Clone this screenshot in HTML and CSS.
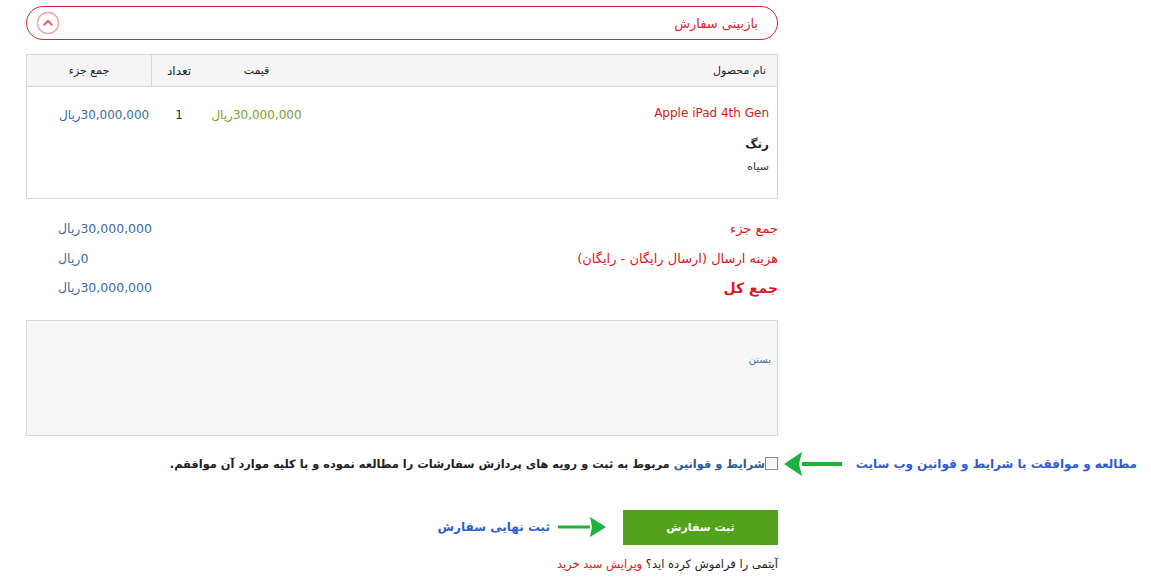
FILE: index.html
```html
<!DOCTYPE html>
<html lang="fa" dir="rtl">
<head>
<meta charset="utf-8">
<title>بازبینی سفارش</title>
<link rel="stylesheet" href="styles.css">
</head>
<body>
<div class="page">
  <div class="review-bar">
    <span class="review-title">بازبینی سفارش</span>
    <svg class="toggle-icon" width="24" height="24" viewBox="0 0 24 24">
      <circle cx="12" cy="12" r="10.5" fill="none" stroke="#f2a3aa" stroke-width="1.4"/>
      <path d="M8.3 13.6 L12 9.9 L15.7 13.6" fill="none" stroke="#e4707b" stroke-width="2.2" stroke-linecap="round" stroke-linejoin="round"/>
    </svg>
  </div>

  <div class="cart-table">
    <div class="row head">
      <div class="c-name">نام محصول</div>
      <div class="c-price">قیمت</div>
      <div class="c-qty">تعداد</div>
      <div class="c-total sep">جمع جزء</div>
    </div>
    <div class="row body">
      <div class="c-name">
        <div class="prod-name">Apple iPad 4th Gen</div>
        <div class="opt-label">رنگ</div>
        <div class="opt-value">سیاه</div>
      </div>
      <div class="c-price green">30,000,000ریال</div>
      <div class="c-qty">1</div>
      <div class="c-total blue">30,000,000ریال</div>
    </div>
  </div>

  <div class="totals">
    <div class="t-row"><span class="t-label">جمع جزء</span><span class="t-val">30,000,000ریال</span></div>
    <div class="t-row"><span class="t-label">هزینه ارسال (ارسال رایگان - رایگان)</span><span class="t-val">0ریال</span></div>
    <div class="t-row grand"><span class="t-label">جمع کل</span><span class="t-val">30,000,000ریال</span></div>
  </div>

  <div class="comment-box"><span class="comment-text">بستن</span></div>

  <div class="agree-row">
    <span class="checkbox"></span>
    <span class="agree-text"><span class="link">شرایط و قوانین</span> مربوط به ثبت و رویه های پردازش سفارشات را مطالعه نموده و با کلیه موارد آن موافقم.</span>
    <div class="annot annot-agree">
      <svg width="60" height="26" viewBox="0 0 60 26">
        <path d="M18 11 H58 V15 H18 Z" fill="#1cb23b"/>
        <path d="M0 13 L18 1 L15 13 L18 25 Z" fill="#1cb23b"/>
      </svg>
      <span class="annot-text">مطالعه و موافقت با شرایط و قوانین وب سایت</span>
    </div>
  </div>

  <div class="submit-row">
    <button class="submit-btn">ثبت سفارش</button>
    <svg class="annot-arrow" width="48" height="22" viewBox="0 0 48 22">
      <path d="M0 9.5 H32 V12.5 H0 Z" fill="#1cb23b"/>
      <path d="M48 11 L32 1 L34 11 L32 21 Z" fill="#1cb23b"/>
    </svg>
    <span class="annot-text">ثبت نهایی سفارش</span>
  </div>

  <div class="forgot">آیتمی را فراموش کرده اید؟ <span class="red">ویرایش سبد خرید</span></div>
</div>
</body>
</html>
```
FILE: styles.css
```css
* { box-sizing: border-box; }
html, body { margin: 0; padding: 0; background: #fff; }
body {
  font-family: "DejaVu Sans", sans-serif;
  font-size: 11px;
  color: #333;
}
.page {
  width: 752px;
  margin-left: 26px;
  margin-right: auto;
  padding-top: 6px;
  position: relative;
}
.review-bar {
  height: 34px;
  border: 1px solid #d9262f;
  border-radius: 17px;
  display: flex;
  align-items: center;
  justify-content: space-between;
  padding: 0 19px 0 9px;
}
.review-title { color: #d9262f; font-size: 13px; }
.toggle-icon { display: block; }

.cart-table {
  margin-top: 14px;
  border: 1px solid #d6d6d6;
}
.row { display: flex; }
.row.head {
  height: 32px;
  background: #f5f5f5;
  border-bottom: 1px solid #d6d6d6;
  align-items: stretch;
}
.row.head > div { display: flex; align-items: center; color: #222; }
.row.head .c-name { padding-right: 11px; }
.row.head .c-price, .row.head .c-qty, .row.head .c-total { justify-content: center; }
.c-name { flex: 1; }
.c-price { width: 101px; text-align: center; }
.c-qty { width: 54px; text-align: center; }
.c-total { width: 125px; text-align: center; }
.sep { border-right: 1px solid #d6d6d6; }
.row.body { height: 111px; }
.row.body > div { padding-top: 21px; }
.row.body .c-name { padding-right: 8px; padding-top: 19px; }
.row.body .c-total { text-align: left; padding-left: 32px; }
.prod-name { color: #e0151d; font-size: 12px; }
.opt-label { font-weight: bold; color: #222; margin-top: 17px; font-size: 12px; }
.opt-value { margin-top: 9px; color: #333; }
.green { color: #77a22a; font-size: 12px; }
.blue { color: #3c6aa3; font-size: 12px; }
.c-qty { color: #333; font-size: 12px; }

.totals { padding-top: 15px; }
.t-row {
  display: flex;
  justify-content: space-between;
  align-items: center;
  height: 29.5px;
  padding-left: 32px;
}
.t-label { color: #e0151d; font-size: 13px; }
.t-val { color: #3c6aa3; font-size: 12.5px; }
.grand .t-label { font-weight: bold; font-size: 14px; }

.comment-box {
  margin-top: 17px;
  height: 116px;
  background: #f6f6f6;
  border: 1px solid #d8d8d8;
  padding: 32px 6px 0 0;
}
.comment-text { color: #46689a; font-size: 10px; }

.agree-row {
  margin-top: 20px;
  display: flex;
  align-items: center;
  height: 16px;
  position: relative;
}
.checkbox {
  width: 13px;
  height: 13px;
  border: 1px solid #8a8a8a;
  background: linear-gradient(#eee, #fbfbfb);
  box-shadow: inset 0 0 0 1px #fff;
  flex: none;
}
.agree-text { font-weight: bold; color: #222; font-size: 11.4px; }
.agree-text .link { color: #2a5c9a; }
.annot {
  position: absolute;
  top: -5px;
  right: -359px;
  display: flex;
  flex-direction: row-reverse;
  align-items: center;
  gap: 12px;
}
.annot svg { display: block; }
.annot-text { color: #2e5bd6; font-weight: bold; font-size: 12px; white-space: nowrap; }

.submit-row {
  margin-top: 38px;
  display: flex;
  align-items: center;
  gap: 8px;
}
.submit-btn {
  width: 155px;
  height: 35px;
  border: none;
  background: #52a31b;
  color: #fff;
  font-family: "DejaVu Sans", sans-serif;
  font-weight: bold;
  font-size: 11px;
  padding: 0;
  margin-left: 9px;
}
.annot-arrow { display: block; }

.forgot { margin-top: 12px; font-size: 11.5px; color: #222; }
.red { color: #e0151d; }
```
